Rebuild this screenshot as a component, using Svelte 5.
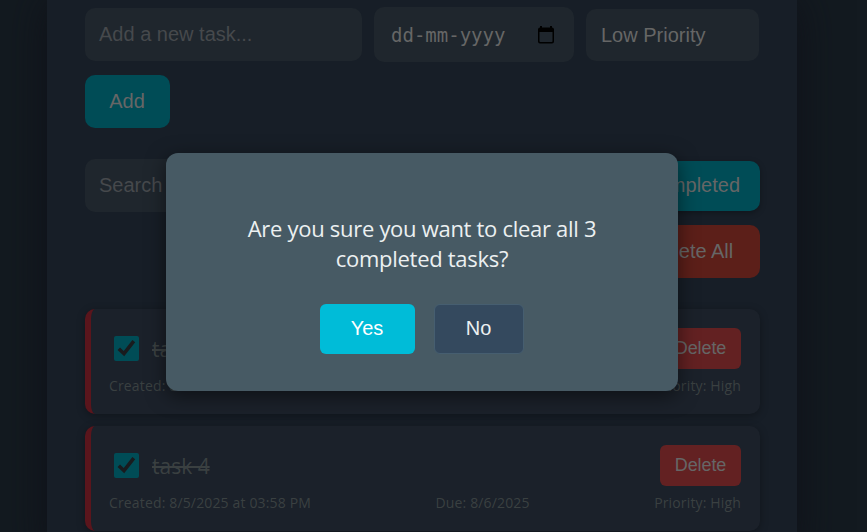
<script>
  const tasks = [
    { title: 'task 3', created: '8/5/2025 at 03:58 PM', due: '8/6/2025', priority: 'High' },
    { title: 'task 4', created: '8/5/2025 at 03:58 PM', due: '8/6/2025', priority: 'High' }
  ];
</script>

<div class="page">
  <main class="panel">
    <div class="entry">
      <div class="field new-task"><span class="hint">Add a new task...</span></div>
      <div class="field date">
        <span class="date-text">dd-mm-yyyy</span>
        <svg width="16" height="18" viewBox="0 0 16 18">
          <path fill="#000" fill-rule="evenodd" d="M2 0h2v1.5h8V0h2v1.5A2 2 0 0 1 16 3.300V15.500A2 2 0 0 1 14 17.500H2A2 2 0 0 1 0 15.500V3.300A2 2 0 0 1 2 1.500ZM1.500 6V15.200Q1.500 16 2.300 16H13.700Q14.500 16 14.500 15.200V6Z" />
        </svg>
      </div>
      <div class="field priority">Low Priority</div>
    </div>
    <button class="btn add">Add</button>

    <div class="tools">
      <div class="field search"><span class="hint">Search tasks...</span></div>
      <div class="bulk">
        <button class="btn clear">Clear Completed</button>
        <button class="btn delete-all">Delete All</button>
      </div>
    </div>

    <ul class="tasks">
      {#each tasks as task}
        <li class="task">
          <div class="row">
            <span class="check">
              <svg width="25" height="25" viewBox="0 0 25 25">
                <path d="M4.800 12.800 10 17.700 19.800 5.200" fill="none" stroke="#191b1e" stroke-width="3.600" />
              </svg>
            </span>
            <span class="title">{task.title}</span>
            <button class="delete">Delete</button>
          </div>
          <div class="meta">
            <span class="created">Created: {task.created}</span>
            <span class="due">Due: {task.due}</span>
            <span class="level">Priority: {task.priority}</span>
          </div>
        </li>
      {/each}
    </ul>
  </main>

  <div class="modal" role="dialog" aria-modal="true">
    <p>Are you sure you want to clear all 3<br />completed tasks?</p>
    <div class="actions">
      <button class="yes">Yes</button>
      <button class="no">No</button>
    </div>
  </div>
</div>

<style>
  :global(body) {
    margin: 0;
    background: #131a20;
  }
  .page {
    position: relative;
    width: 867px;
    height: 532px;
    overflow: hidden;
    background: #131a20;
    font-family: 'Liberation Sans', Arial, sans-serif;
    font-size: 20px;
  }
  button {
    font-family: inherit;
    margin: 0;
    padding: 0;
    border: 0;
  }
  .panel {
    box-sizing: border-box;
    width: 750px;
    height: 560px;
    margin-left: 47px;
    padding: 7px 37px 0 38px;
    background: #171e27;
    box-shadow: 0 0 40px rgba(14, 16, 23, 0.9);
  }
  .entry {
    display: flex;
    align-items: center;
    gap: 12px;
    height: 55px;
    margin-bottom: 13px;
  }
  .field {
    box-sizing: border-box;
    display: flex;
    align-items: center;
    height: 53px;
    padding: 0 14px;
    border-radius: 10px;
    background: #1f262d;
    color: #666;
  }
  .hint {
    color: #46494c;
  }
  .new-task {
    width: 277px;
  }
  .date {
    width: 200px;
    height: 55px;
    padding: 0 20px 0 17px;
    justify-content: space-between;
    font-family: 'DejaVu Sans Mono', monospace;
    font-size: 19px;
  }
  .priority {
    width: 173px;
    height: 52px;
    padding: 2px 15px 0;
  }
  .btn {
    display: block;
    height: 53px;
    border-radius: 10px;
    font-size: 20px;
    color: #666;
  }
  .add {
    width: 85px;
    padding-right: 1px;
    background: #004c56;
  }
  .tools {
    display: flex;
    justify-content: space-between;
    margin-top: 31px;
  }
  .search {
    width: 330px;
  }
  .bulk {
    display: flex;
    flex-direction: column;
    align-items: flex-end;
    gap: 14px;
    padding-top: 2px;
  }
  .clear {
    width: 190px;
    height: 50px;
    padding-bottom: 2px;
    background: #004c56;
    box-shadow: 0 2px 6px rgba(0, 0, 0, 0.3);
  }
  .delete-all {
    width: 138px;
    background: #5c1f19;
  }
  .tasks {
    display: flex;
    flex-direction: column;
    gap: 12px;
    list-style: none;
    margin: 31px 0 0;
    padding: 0;
  }
  .task {
    box-sizing: border-box;
    height: 105px;
    padding: 19px 19px 0 18px;
    border-left: 6px solid #5a151c;
    border-radius: 10px;
    background: #1b212a;
    box-shadow: 0 2px 8px rgba(0, 0, 0, 0.3);
    font-family: 'Open Sans', 'Noto Sans', sans-serif;
    color: #3a4041;
  }
  .row {
    display: flex;
    align-items: center;
    height: 41px;
  }
  .check {
    width: 25px;
    height: 25px;
    margin: 0 13px 0 5px;
    border-radius: 2px;
    background: #004c56;
  }
  .check svg {
    display: block;
  }
  .title {
    flex: 1;
    font-size: 21px;
    text-decoration: line-through;
  }
  .delete {
    width: 81px;
    height: 41px;
    border-radius: 6px;
    background: #632122;
    color: #666;
    font-family: 'Liberation Sans', Arial, sans-serif;
    font-size: 18px;
    letter-spacing: -0.1px;
  }
  .meta {
    display: flex;
    justify-content: space-between;
    margin-top: 7px;
    font-size: 14px;
    line-height: 20px;
    letter-spacing: 0.15px;
    white-space: nowrap;
  }
  .modal {
    position: absolute;
    left: 166px;
    top: 153px;
    box-sizing: border-box;
    width: 512px;
    height: 238px;
    padding-top: 60px;
    border-radius: 12px;
    background: #475a64;
    box-shadow: 0 5px 20px rgba(0, 0, 0, 0.5);
    color: #ecf0f1;
  }
  .modal p {
    margin: 0 0 31px;
    text-align: center;
    font-family: 'Open Sans', 'Noto Sans', sans-serif;
    font-size: 22px;
    line-height: 30px;
    letter-spacing: -0.29px;
    white-space: nowrap;
  }
  .actions {
    display: flex;
    justify-content: center;
    gap: 19px;
    padding-right: 1px;
  }
  .yes,
  .no {
    box-sizing: border-box;
    width: 95px;
    height: 50px;
    padding-bottom: 2px;
    border-radius: 6px;
    background: #00bcd8;
    color: #fff;
    font-size: 20px;
  }
  .no {
    width: 90px;
    border: 1px solid #465e70;
    background: #34495e;
    color: #ecf0f1;
  }
</style>
